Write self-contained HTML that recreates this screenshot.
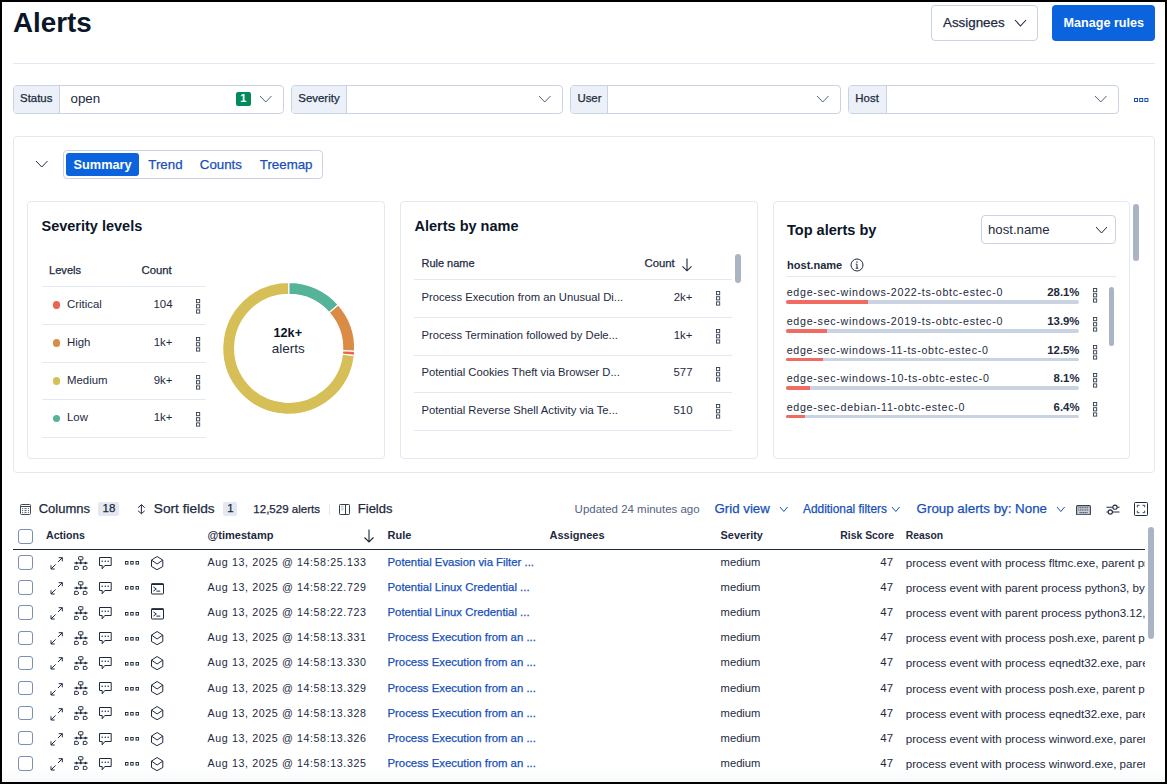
<!DOCTYPE html>
<html><head><meta charset="utf-8">
<style>
*{box-sizing:border-box;margin:0;padding:0}
html,body{width:1167px;height:784px;overflow:hidden;background:#fff}
body{font-family:"Liberation Sans",sans-serif;color:#1D2A3E;position:relative}
.a{position:absolute;white-space:nowrap}
.frame{position:absolute;left:0;top:0;width:1167px;height:784px;border:2px solid #000;z-index:50;pointer-events:none}
</style></head><body>
<div class="frame"></div>
<div class="a" style="left:13.00px;top:9px;font-size:27.8px;line-height:27.8px;color:#0B1628;font-weight:bold;">Alerts</div>
<div class="a" style="left:931px;top:5px;width:107px;height:36px;border:1px solid #CAD3E2;border-radius:4px"></div>
<div class="a" style="left:943.00px;top:16px;font-size:13.37px;line-height:13.37px;color:#1D2A3E;-webkit-text-stroke:0.25px currentColor;">Assignees</div>
<svg class="a" style="left:1014px;top:19.2px" width="13" height="8" viewBox="0 0 13 8"><path d="M1 1L6.50 7.00L12.00 1" fill="none" stroke="#1D2A3E" stroke-width="1.1"/></svg>
<div class="a" style="left:1052px;top:5px;width:103px;height:36px;background:#0B64DD;border-radius:4px"></div>
<div class="a" style="left:1063.50px;top:17px;font-size:12.6px;line-height:12.6px;color:#fff;font-weight:bold;">Manage rules</div>
<div class="a" style="left:13px;top:63px;width:1142px;height:1px;background:#E3E8F2"></div>
<div class="a" style="left:13px;top:85px;width:271px;height:29px;border:1px solid #CAD3E2;border-radius:4px;overflow:hidden"></div>
<div class="a" style="left:14px;top:86px;width:45.6px;height:27px;background:#ECF1F9;border-right:1px solid #CAD3E2;border-radius:3px 0 0 3px"></div>
<div class="a" style="left:20.00px;top:93px;font-size:11.45px;line-height:11.45px;color:#1D2A3E;-webkit-text-stroke:0.25px currentColor;">Status</div>
<svg class="a" style="left:259px;top:95px" width="13.5" height="8" viewBox="0 0 13.5 8"><path d="M1 1L6.75 7.00L12.50 1" fill="none" stroke="#516381" stroke-width="1"/></svg>
<div class="a" style="left:291.3px;top:85px;width:271.3px;height:29px;border:1px solid #CAD3E2;border-radius:4px;overflow:hidden"></div>
<div class="a" style="left:292.3px;top:86px;width:55.2px;height:27px;background:#ECF1F9;border-right:1px solid #CAD3E2;border-radius:3px 0 0 3px"></div>
<div class="a" style="left:298.30px;top:93px;font-size:11.45px;line-height:11.45px;color:#1D2A3E;-webkit-text-stroke:0.25px currentColor;">Severity</div>
<svg class="a" style="left:537.6px;top:95px" width="13.5" height="8" viewBox="0 0 13.5 8"><path d="M1 1L6.75 7.00L12.50 1" fill="none" stroke="#516381" stroke-width="1"/></svg>
<div class="a" style="left:570.4px;top:85px;width:270.2px;height:29px;border:1px solid #CAD3E2;border-radius:4px;overflow:hidden"></div>
<div class="a" style="left:571.4px;top:86px;width:37px;height:27px;background:#ECF1F9;border-right:1px solid #CAD3E2;border-radius:3px 0 0 3px"></div>
<div class="a" style="left:577.40px;top:93px;font-size:11.45px;line-height:11.45px;color:#1D2A3E;-webkit-text-stroke:0.25px currentColor;">User</div>
<svg class="a" style="left:815.5999999999999px;top:95px" width="13.5" height="8" viewBox="0 0 13.5 8"><path d="M1 1L6.75 7.00L12.50 1" fill="none" stroke="#516381" stroke-width="1"/></svg>
<div class="a" style="left:848.3px;top:85px;width:270.7px;height:29px;border:1px solid #CAD3E2;border-radius:4px;overflow:hidden"></div>
<div class="a" style="left:849.3px;top:86px;width:38px;height:27px;background:#ECF1F9;border-right:1px solid #CAD3E2;border-radius:3px 0 0 3px"></div>
<div class="a" style="left:855.30px;top:93px;font-size:11.45px;line-height:11.45px;color:#1D2A3E;-webkit-text-stroke:0.25px currentColor;">Host</div>
<svg class="a" style="left:1094.0px;top:95px" width="13.5" height="8" viewBox="0 0 13.5 8"><path d="M1 1L6.75 7.00L12.50 1" fill="none" stroke="#516381" stroke-width="1"/></svg>
<div class="a" style="left:70.50px;top:92px;font-size:13.35px;line-height:13.35px;color:#1D2A3E;">open</div>
<div class="a" style="left:236px;top:92px;width:15px;height:14px;background:#008A5E;border-radius:2px"></div>
<div class="a" style="left:240.30px;top:93px;font-size:11.0px;line-height:11.0px;color:#fff;font-weight:bold;">1</div>
<svg class="a" style="left:1133.5px;top:98px" width="15" height="5" viewBox="0 0 15 5"><g fill="none" stroke="#1750BA" stroke-width="1"><rect x="0.5" y="0.5" width="3" height="3"/><rect x="5.7" y="0.5" width="3" height="3"/><rect x="10.9" y="0.5" width="3" height="3"/></g></svg>
<div class="a" style="left:13px;top:136px;width:1142px;height:337px;border:1px solid #E3E8F2;border-radius:4px"></div>
<svg class="a" style="left:34.5px;top:160px" width="13.5" height="8" viewBox="0 0 13.5 8"><path d="M1 1L6.75 7.00L12.50 1" fill="none" stroke="#1D2A3E" stroke-width="1"/></svg>
<div class="a" style="left:63px;top:150px;width:260px;height:29px;border:1px solid #CAD3E2;border-radius:4px"></div>
<div class="a" style="left:66px;top:153px;width:73px;height:23px;background:#0B64DD;border-radius:3px"></div>
<div class="a" style="left:73.50px;top:159px;font-size:12.75px;line-height:12.75px;color:#fff;font-weight:bold;">Summary</div>
<div class="a" style="left:148.30px;top:158px;font-size:13.3px;line-height:13.3px;color:#1750BA;-webkit-text-stroke:0.25px currentColor;">Trend</div>
<div class="a" style="left:199.80px;top:158px;font-size:13.3px;line-height:13.3px;color:#1750BA;-webkit-text-stroke:0.25px currentColor;">Counts</div>
<div class="a" style="left:259.80px;top:158px;font-size:13.3px;line-height:13.3px;color:#1750BA;-webkit-text-stroke:0.25px currentColor;">Treemap</div>
<div class="a" style="left:27px;top:201px;width:358px;height:258px;border:1px solid #E3E8F2;border-radius:4px"></div>
<div class="a" style="left:400px;top:201px;width:358px;height:258px;border:1px solid #E3E8F2;border-radius:4px"></div>
<div class="a" style="left:772.5px;top:201px;width:357.5px;height:258px;border:1px solid #E3E8F2;border-radius:4px"></div>
<div class="a" style="left:41.50px;top:219px;font-size:14.5px;line-height:14.5px;color:#0B1628;font-weight:bold;">Severity levels</div>
<div class="a" style="left:49.00px;top:265px;font-size:11.1px;line-height:11.1px;color:#1D2A3E;-webkit-text-stroke:0.25px currentColor;">Levels</div>
<div class="a" style="left:141.50px;top:265px;font-size:11.35px;line-height:11.35px;color:#1D2A3E;-webkit-text-stroke:0.25px currentColor;">Count</div>
<div class="a" style="left:42px;top:286px;width:164px;height:1px;background:#E3E8F2"></div>
<div class="a" style="left:42px;top:324px;width:164px;height:1px;background:#E3E8F2"></div>
<div class="a" style="left:42px;top:361.7px;width:164px;height:1px;background:#E3E8F2"></div>
<div class="a" style="left:42px;top:399.3px;width:164px;height:1px;background:#E3E8F2"></div>
<div class="a" style="left:42px;top:437px;width:164px;height:1px;background:#E3E8F2"></div>
<div class="a" style="left:52.5px;top:301.2px;width:7.8px;height:7.8px;background:#E7664C;border-radius:50%"></div>
<div class="a" style="left:67.00px;top:299px;font-size:11.42px;line-height:11.42px;color:#1D2A3E;">Critical</div>
<div class="a" style="left:-127.50px;width:300px;text-align:right;top:299px;font-size:11.42px;line-height:11.42px;color:#1D2A3E;">104</div>
<svg class="a" style="left:195.5px;top:299px" width="5" height="15" viewBox="0 0 5 15"><g fill="none" stroke="#1D2A3E" stroke-width=".9" opacity=".9"><rect x="0.5" y="0.5" width="3.2" height="3.2"/><rect x="0.5" y="5.7" width="3.2" height="3.2"/><rect x="0.5" y="10.9" width="3.2" height="3.2"/></g></svg>
<div class="a" style="left:52.5px;top:339.2px;width:7.8px;height:7.8px;background:#DA8B45;border-radius:50%"></div>
<div class="a" style="left:67.00px;top:337px;font-size:11.42px;line-height:11.42px;color:#1D2A3E;">High</div>
<div class="a" style="left:-127.50px;width:300px;text-align:right;top:337px;font-size:11.42px;line-height:11.42px;color:#1D2A3E;">1k+</div>
<svg class="a" style="left:195.5px;top:337px" width="5" height="15" viewBox="0 0 5 15"><g fill="none" stroke="#1D2A3E" stroke-width=".9" opacity=".9"><rect x="0.5" y="0.5" width="3.2" height="3.2"/><rect x="0.5" y="5.7" width="3.2" height="3.2"/><rect x="0.5" y="10.9" width="3.2" height="3.2"/></g></svg>
<div class="a" style="left:52.5px;top:376.9px;width:7.8px;height:7.8px;background:#D6BF57;border-radius:50%"></div>
<div class="a" style="left:67.00px;top:375px;font-size:11.42px;line-height:11.42px;color:#1D2A3E;">Medium</div>
<div class="a" style="left:-127.50px;width:300px;text-align:right;top:375px;font-size:11.42px;line-height:11.42px;color:#1D2A3E;">9k+</div>
<svg class="a" style="left:195.5px;top:374.7px" width="5" height="15" viewBox="0 0 5 15"><g fill="none" stroke="#1D2A3E" stroke-width=".9" opacity=".9"><rect x="0.5" y="0.5" width="3.2" height="3.2"/><rect x="0.5" y="5.7" width="3.2" height="3.2"/><rect x="0.5" y="10.9" width="3.2" height="3.2"/></g></svg>
<div class="a" style="left:52.5px;top:414.5px;width:7.8px;height:7.8px;background:#54B399;border-radius:50%"></div>
<div class="a" style="left:67.00px;top:412px;font-size:11.42px;line-height:11.42px;color:#1D2A3E;">Low</div>
<div class="a" style="left:-127.50px;width:300px;text-align:right;top:412px;font-size:11.42px;line-height:11.42px;color:#1D2A3E;">1k+</div>
<svg class="a" style="left:195.5px;top:412.3px" width="5" height="15" viewBox="0 0 5 15"><g fill="none" stroke="#1D2A3E" stroke-width=".9" opacity=".9"><rect x="0.5" y="0.5" width="3.2" height="3.2"/><rect x="0.5" y="5.7" width="3.2" height="3.2"/><rect x="0.5" y="10.9" width="3.2" height="3.2"/></g></svg>
<svg class="a" style="left:0;top:0" width="1167" height="784"><g stroke="#fff" stroke-width="1.2"><path d="M288.70 282.30A66 66 0 0 1 338.28 304.74L329.27 312.66A54 54 0 0 0 288.70 294.30Z" fill="#54B399"/><path d="M338.28 304.74A66 66 0 0 1 354.63 351.29L342.64 350.75A54 54 0 0 0 329.27 312.66Z" fill="#DA8B45"/><path d="M354.63 351.29A66 66 0 0 1 354.30 355.54L342.37 354.23A54 54 0 0 0 342.64 350.75Z" fill="#E7664C"/><path d="M354.30 355.54A66 66 0 1 1 288.70 282.30L288.70 294.30A54 54 0 1 0 342.37 354.23Z" fill="#D6BF57"/></g></svg>
<div class="a" style="left:273.50px;top:327px;font-size:12.7px;line-height:12.7px;color:#0B1628;font-weight:bold;">12k+</div>
<div class="a" style="left:271.80px;top:342px;font-size:13.5px;line-height:13.5px;color:#1D2A3E;">alerts</div>
<div class="a" style="left:414.50px;top:219px;font-size:14.5px;line-height:14.5px;color:#0B1628;font-weight:bold;">Alerts by name</div>
<div class="a" style="left:421.50px;top:258px;font-size:10.98px;line-height:10.98px;color:#1D2A3E;-webkit-text-stroke:0.25px currentColor;">Rule name</div>
<div class="a" style="left:644.50px;top:258px;font-size:11.35px;line-height:11.35px;color:#1D2A3E;-webkit-text-stroke:0.25px currentColor;">Count</div>
<svg class="a" style="left:680.5px;top:257.5px" width="12" height="14" viewBox="0 0 12 14"><path d="M6 0.5v12.5M1.5 8.3L6 12.8l4.5-4.5" fill="none" stroke="#1D2A3E" stroke-width="1.1"/></svg>
<div class="a" style="left:735px;top:253.5px;width:6px;height:29px;background:#A9B4C5;border-radius:3px"></div>
<div class="a" style="left:414px;top:279.3px;width:318px;height:1px;background:#E3E8F2"></div>
<div class="a" style="left:414px;top:317.4px;width:318px;height:1px;background:#E3E8F2"></div>
<div class="a" style="left:414px;top:354.8px;width:318px;height:1px;background:#E3E8F2"></div>
<div class="a" style="left:414px;top:392.3px;width:318px;height:1px;background:#E3E8F2"></div>
<div class="a" style="left:414px;top:430px;width:318px;height:1px;background:#E3E8F2"></div>
<div class="a" style="left:421.50px;top:292px;font-size:11.24px;line-height:11.24px;color:#1D2A3E;">Process Execution from an Unusual Di...</div>
<div class="a" style="left:392.50px;width:300px;text-align:right;top:292px;font-size:11.42px;line-height:11.42px;color:#1D2A3E;">2k+</div>
<svg class="a" style="left:715.5px;top:291.1px" width="5" height="15" viewBox="0 0 5 15"><g fill="none" stroke="#1D2A3E" stroke-width=".9" opacity=".9"><rect x="0.5" y="0.5" width="3.2" height="3.2"/><rect x="0.5" y="5.7" width="3.2" height="3.2"/><rect x="0.5" y="10.9" width="3.2" height="3.2"/></g></svg>
<div class="a" style="left:421.50px;top:330px;font-size:11.24px;line-height:11.24px;color:#1D2A3E;">Process Termination followed by Dele...</div>
<div class="a" style="left:392.50px;width:300px;text-align:right;top:330px;font-size:11.42px;line-height:11.42px;color:#1D2A3E;">1k+</div>
<svg class="a" style="left:715.5px;top:329.2px" width="5" height="15" viewBox="0 0 5 15"><g fill="none" stroke="#1D2A3E" stroke-width=".9" opacity=".9"><rect x="0.5" y="0.5" width="3.2" height="3.2"/><rect x="0.5" y="5.7" width="3.2" height="3.2"/><rect x="0.5" y="10.9" width="3.2" height="3.2"/></g></svg>
<div class="a" style="left:421.50px;top:367px;font-size:11.24px;line-height:11.24px;color:#1D2A3E;">Potential Cookies Theft via Browser D...</div>
<div class="a" style="left:392.50px;width:300px;text-align:right;top:367px;font-size:11.42px;line-height:11.42px;color:#1D2A3E;">577</div>
<svg class="a" style="left:715.5px;top:366.6px" width="5" height="15" viewBox="0 0 5 15"><g fill="none" stroke="#1D2A3E" stroke-width=".9" opacity=".9"><rect x="0.5" y="0.5" width="3.2" height="3.2"/><rect x="0.5" y="5.7" width="3.2" height="3.2"/><rect x="0.5" y="10.9" width="3.2" height="3.2"/></g></svg>
<div class="a" style="left:421.50px;top:405px;font-size:11.24px;line-height:11.24px;color:#1D2A3E;">Potential Reverse Shell Activity via Te...</div>
<div class="a" style="left:392.50px;width:300px;text-align:right;top:405px;font-size:11.42px;line-height:11.42px;color:#1D2A3E;">510</div>
<svg class="a" style="left:715.5px;top:404.1px" width="5" height="15" viewBox="0 0 5 15"><g fill="none" stroke="#1D2A3E" stroke-width=".9" opacity=".9"><rect x="0.5" y="0.5" width="3.2" height="3.2"/><rect x="0.5" y="5.7" width="3.2" height="3.2"/><rect x="0.5" y="10.9" width="3.2" height="3.2"/></g></svg>
<div class="a" style="left:787.00px;top:223px;font-size:14.55px;line-height:14.55px;color:#0B1628;font-weight:bold;">Top alerts by</div>
<div class="a" style="left:981px;top:215px;width:135px;height:29px;border:1px solid #CAD3E2;border-radius:4px"></div>
<div class="a" style="left:988.00px;top:223px;font-size:13.19px;line-height:13.19px;color:#1D2A3E;">host.name</div>
<svg class="a" style="left:1095px;top:225.5px" width="13" height="8" viewBox="0 0 13 8"><path d="M1 1L6.50 7.00L12.00 1" fill="none" stroke="#1D2A3E" stroke-width="1"/></svg>
<div class="a" style="left:787.00px;top:260px;font-size:11.06px;line-height:11.06px;color:#1D2A3E;font-weight:bold;">host.name</div>
<svg class="a" style="left:850px;top:257.8px" width="14" height="14" viewBox="0 0 14 14"><circle cx="7" cy="7" r="6" fill="none" stroke="#1D2A3E" stroke-width="1"/><path d="M7 6.2v4M5.7 10.2h2.6M5.8 6.2h1.2" fill="none" stroke="#1D2A3E" stroke-width="1"/><circle cx="7" cy="4.1" r=".75" fill="#1D2A3E"/></svg>
<div class="a" style="left:786px;top:276px;width:330px;height:1px;background:#E3E8F2"></div>
<div class="a" style="left:786.70px;top:287px;font-size:10.68px;line-height:10.68px;color:#1D2A3E;letter-spacing:0.718px;">edge-sec-windows-2022-ts-obtc-estec-0</div>
<div class="a" style="left:779.50px;width:300px;text-align:right;top:287px;font-size:11.39px;line-height:11.39px;color:#1D2A3E;font-weight:bold;">28.1%</div>
<div class="a" style="left:786px;top:300.3px;width:293px;height:3.6px;background:#CAD3E2;border-radius:2px;overflow:hidden"></div>
<div class="a" style="left:786px;top:300.3px;width:82.3px;height:3.6px;background:#F06C62;border-radius:2px 0 0 2px"></div>
<svg class="a" style="left:1092.5px;top:287.7px" width="5" height="15" viewBox="0 0 5 15"><g fill="none" stroke="#1D2A3E" stroke-width=".9" opacity=".9"><rect x="0.5" y="0.5" width="3.2" height="3.2"/><rect x="0.5" y="5.7" width="3.2" height="3.2"/><rect x="0.5" y="10.9" width="3.2" height="3.2"/></g></svg>
<div class="a" style="left:786.70px;top:316px;font-size:10.68px;line-height:10.68px;color:#1D2A3E;letter-spacing:0.718px;">edge-sec-windows-2019-ts-obtc-estec-0</div>
<div class="a" style="left:779.50px;width:300px;text-align:right;top:316px;font-size:11.39px;line-height:11.39px;color:#1D2A3E;font-weight:bold;">13.9%</div>
<div class="a" style="left:786px;top:329.3px;width:293px;height:3.6px;background:#CAD3E2;border-radius:2px;overflow:hidden"></div>
<div class="a" style="left:786px;top:329.3px;width:40.7px;height:3.6px;background:#F06C62;border-radius:2px 0 0 2px"></div>
<svg class="a" style="left:1092.5px;top:316.7px" width="5" height="15" viewBox="0 0 5 15"><g fill="none" stroke="#1D2A3E" stroke-width=".9" opacity=".9"><rect x="0.5" y="0.5" width="3.2" height="3.2"/><rect x="0.5" y="5.7" width="3.2" height="3.2"/><rect x="0.5" y="10.9" width="3.2" height="3.2"/></g></svg>
<div class="a" style="left:786.70px;top:345px;font-size:10.68px;line-height:10.68px;color:#1D2A3E;letter-spacing:0.709px;">edge-sec-windows-11-ts-obtc-estec-0</div>
<div class="a" style="left:779.50px;width:300px;text-align:right;top:345px;font-size:11.39px;line-height:11.39px;color:#1D2A3E;font-weight:bold;">12.5%</div>
<div class="a" style="left:786px;top:357.8px;width:293px;height:3.6px;background:#CAD3E2;border-radius:2px;overflow:hidden"></div>
<div class="a" style="left:786px;top:357.8px;width:36.6px;height:3.6px;background:#F06C62;border-radius:2px 0 0 2px"></div>
<svg class="a" style="left:1092.5px;top:345.2px" width="5" height="15" viewBox="0 0 5 15"><g fill="none" stroke="#1D2A3E" stroke-width=".9" opacity=".9"><rect x="0.5" y="0.5" width="3.2" height="3.2"/><rect x="0.5" y="5.7" width="3.2" height="3.2"/><rect x="0.5" y="10.9" width="3.2" height="3.2"/></g></svg>
<div class="a" style="left:786.70px;top:373px;font-size:10.68px;line-height:10.68px;color:#1D2A3E;letter-spacing:0.713px;">edge-sec-windows-10-ts-obtc-estec-0</div>
<div class="a" style="left:779.50px;width:300px;text-align:right;top:373px;font-size:11.39px;line-height:11.39px;color:#1D2A3E;font-weight:bold;">8.1%</div>
<div class="a" style="left:786px;top:386.0px;width:293px;height:3.6px;background:#CAD3E2;border-radius:2px;overflow:hidden"></div>
<div class="a" style="left:786px;top:386.0px;width:23.7px;height:3.6px;background:#F06C62;border-radius:2px 0 0 2px"></div>
<svg class="a" style="left:1092.5px;top:373.4px" width="5" height="15" viewBox="0 0 5 15"><g fill="none" stroke="#1D2A3E" stroke-width=".9" opacity=".9"><rect x="0.5" y="0.5" width="3.2" height="3.2"/><rect x="0.5" y="5.7" width="3.2" height="3.2"/><rect x="0.5" y="10.9" width="3.2" height="3.2"/></g></svg>
<div class="a" style="left:786.70px;top:402px;font-size:10.68px;line-height:10.68px;color:#1D2A3E;letter-spacing:0.710px;">edge-sec-debian-11-obtc-estec-0</div>
<div class="a" style="left:779.50px;width:300px;text-align:right;top:402px;font-size:11.39px;line-height:11.39px;color:#1D2A3E;font-weight:bold;">6.4%</div>
<div class="a" style="left:786px;top:414.9px;width:293px;height:3.6px;background:#CAD3E2;border-radius:2px;overflow:hidden"></div>
<div class="a" style="left:786px;top:414.9px;width:18.8px;height:3.6px;background:#F06C62;border-radius:2px 0 0 2px"></div>
<svg class="a" style="left:1092.5px;top:402.3px" width="5" height="15" viewBox="0 0 5 15"><g fill="none" stroke="#1D2A3E" stroke-width=".9" opacity=".9"><rect x="0.5" y="0.5" width="3.2" height="3.2"/><rect x="0.5" y="5.7" width="3.2" height="3.2"/><rect x="0.5" y="10.9" width="3.2" height="3.2"/></g></svg>
<div class="a" style="left:1109px;top:286.7px;width:5px;height:59px;background:#A9B4C5;border-radius:3px"></div>
<div class="a" style="left:1133px;top:204px;width:6px;height:57px;background:#A9B4C5;border-radius:3px"></div>
<svg class="a" style="left:20px;top:504px" width="11" height="11" viewBox="0 0 11 11"><g fill="none" stroke="#1D2A3E" stroke-width="1" opacity=".85"><rect x="0.5" y="0.5" width="10" height="10" rx="1"/><path d="M0.5 2.5h10"/></g><g fill="#1D2A3E" opacity=".8"><circle cx="2.6" cy="4.6" r=".6"/><circle cx="2.6" cy="6.6" r=".6"/><circle cx="2.6" cy="8.6" r=".6"/><rect x="4.5" y="4.1" width="2" height="1"/><rect x="4.5" y="6.1" width="2" height="1"/><rect x="4.5" y="8.1" width="2" height="1"/><circle cx="8.4" cy="4.6" r=".6"/><circle cx="8.4" cy="6.6" r=".6"/><circle cx="8.4" cy="8.6" r=".6"/></g></svg>
<div class="a" style="left:38.70px;top:502px;font-size:13.03px;line-height:13.03px;color:#1D2A3E;-webkit-text-stroke:0.25px currentColor;">Columns</div>
<div class="a" style="left:98px;top:502px;width:21px;height:13.5px;background:#E3E8F2;border-radius:2px"></div>
<div class="a" style="left:102.50px;top:503px;font-size:11.5px;line-height:11.5px;color:#1D2A3E;-webkit-text-stroke:0.25px currentColor;">18</div>
<svg class="a" style="left:136px;top:503px" width="11" height="12" viewBox="0 0 11 12"><path d="M5.4 1.8V10.5M2.1 4.7L5.4 1.7 8.7 4.7M2.1 7.8L5.4 10.7 8.7 7.8" fill="none" stroke="#1D2A3E" stroke-width="1"/></svg>
<div class="a" style="left:153.80px;top:502px;font-size:13.7px;line-height:13.7px;color:#1D2A3E;-webkit-text-stroke:0.25px currentColor;">Sort fields</div>
<div class="a" style="left:223px;top:502px;width:14px;height:13.5px;background:#E3E8F2;border-radius:2px"></div>
<div class="a" style="left:227.30px;top:503px;font-size:11.5px;line-height:11.5px;color:#1D2A3E;-webkit-text-stroke:0.25px currentColor;">1</div>
<div class="a" style="left:253.30px;top:504px;font-size:11.55px;line-height:11.55px;color:#1D2A3E;-webkit-text-stroke:0.25px currentColor;">12,529 alerts</div>
<div class="a" style="left:329px;top:504px;width:1px;height:11px;background:#E3E8F2"></div>
<svg class="a" style="left:339px;top:504px" width="11" height="11" viewBox="0 0 11 11"><g fill="none" stroke="#1D2A3E" stroke-width="1" opacity=".9"><rect x="0.5" y="0.5" width="10" height="10" rx=".8"/><path d="M6.5 0.5v10"/></g><g stroke="#1D2A3E" stroke-width=".9" opacity=".35"><path d="M2.2 2.2h2.4M2.2 4h2.4M2.2 5.8h2.4"/></g></svg>
<div class="a" style="left:357.80px;top:502px;font-size:13.01px;line-height:13.01px;color:#1D2A3E;-webkit-text-stroke:0.25px currentColor;">Fields</div>
<div class="a" style="left:574.60px;top:504px;font-size:11.47px;line-height:11.47px;color:#516381;">Updated 24 minutes ago</div>
<div class="a" style="left:714.50px;top:502px;font-size:13.27px;line-height:13.27px;color:#1750BA;-webkit-text-stroke:0.25px currentColor;">Grid view</div>
<svg class="a" style="left:778.7px;top:506px" width="9.6" height="6.5" viewBox="0 0 9.6 6.5"><path d="M1 1L4.80 5.50L8.60 1" fill="none" stroke="#1750BA" stroke-width="1"/></svg>
<div class="a" style="left:803.00px;top:504px;font-size:11.9px;line-height:11.9px;color:#1750BA;-webkit-text-stroke:0.25px currentColor;">Additional filters</div>
<svg class="a" style="left:891.3px;top:506px" width="9.6" height="6.5" viewBox="0 0 9.6 6.5"><path d="M1 1L4.80 5.50L8.60 1" fill="none" stroke="#1750BA" stroke-width="1"/></svg>
<div class="a" style="left:916.60px;top:502px;font-size:13.33px;line-height:13.33px;color:#1750BA;-webkit-text-stroke:0.25px currentColor;">Group alerts by: None</div>
<svg class="a" style="left:1055.5px;top:506px" width="9.6" height="6.5" viewBox="0 0 9.6 6.5"><path d="M1 1L4.80 5.50L8.60 1" fill="none" stroke="#1750BA" stroke-width="1"/></svg>
<svg class="a" style="left:1076px;top:504.5px" width="15" height="10.5" viewBox="0 0 15 10.5"><rect x="0.6" y="0.6" width="13.8" height="9.3" rx="1" fill="#C9CED6" stroke="#343F52" stroke-width="1.1"/><path d="M2.3 2.8h10.4M2.3 5h10.4M3.5 7.6h8" stroke="#4A5567" stroke-width="1.1" stroke-dasharray="1.2 .5"/></svg>
<svg class="a" style="left:1105.5px;top:503.5px" width="14" height="11" viewBox="0 0 14 11"><g fill="none" stroke="#1D2A3E" stroke-width="1.1"><path d="M0.5 3.2h13M0.5 8h13"/><circle cx="9" cy="3.2" r="2.1" fill="#fff"/><circle cx="4.3" cy="8" r="2.1" fill="#fff"/></g></svg>
<svg class="a" style="left:1134px;top:502px" width="14" height="14" viewBox="0 0 14 14"><rect x="0.5" y="0.5" width="13" height="13" rx=".8" fill="none" stroke="#1D2A3E" stroke-width="1"/><path d="M3.3 5.3V3.3h2.2M8.5 3.3h2.2v2M10.7 8.7v2H8.5M5.5 10.7H3.3V8.7" fill="none" stroke="#1D2A3E" stroke-width="1" opacity=".85"/></svg>
<div class="a" style="left:18px;top:529px;width:14.5px;height:14.5px;border:1px solid #7A8FB5;border-radius:3px;background:#fff"></div>
<div class="a" style="left:46.00px;top:530px;font-size:10.64px;line-height:10.64px;color:#1D2A3E;font-weight:bold;">Actions</div>
<div class="a" style="left:207.50px;top:530px;font-size:11.04px;line-height:11.04px;color:#1D2A3E;font-weight:bold;">@timestamp</div>
<div class="a" style="left:387.50px;top:530px;font-size:11.0px;line-height:11.0px;color:#1D2A3E;font-weight:bold;">Rule</div>
<div class="a" style="left:549.50px;top:530px;font-size:11.0px;line-height:11.0px;color:#1D2A3E;font-weight:bold;">Assignees</div>
<div class="a" style="left:720.60px;top:530px;font-size:10.89px;line-height:10.89px;color:#1D2A3E;font-weight:bold;">Severity</div>
<div class="a" style="left:594.00px;width:300px;text-align:right;top:531px;font-size:10.39px;line-height:10.39px;color:#1D2A3E;font-weight:bold;">Risk Score</div>
<div class="a" style="left:905.70px;top:531px;font-size:10.33px;line-height:10.33px;color:#1D2A3E;font-weight:bold;">Reason</div>
<svg class="a" style="left:363px;top:529px" width="12" height="14" viewBox="0 0 12 14"><path d="M6 0.5v12.5M1.5 8.5L6 13l4.5-4.5" fill="none" stroke="#1D2A3E" stroke-width="1.1"/></svg>
<div class="a" style="left:13px;top:548.5px;width:1132px;height:1.5px;background:#1D2A3E"></div>
<div class="a" style="left:1148px;top:527px;width:6px;height:111.5px;background:#A9B4C5;border-radius:3px"></div>
<div class="a" style="left:2px;top:768px;width:1163px;height:14px;background:linear-gradient(rgba(255,255,255,0),rgba(230,234,240,.3))"></div>
<div class="a" style="left:18px;top:555.2px;width:14.5px;height:14.5px;border:1px solid #7A8FB5;border-radius:3px;background:#fff"></div>
<svg class="a" style="left:49.5px;top:557.0px" width="13" height="13" viewBox="0 0 13 13"><g fill="none" stroke="#1D2A3E" stroke-width="1"><path d="M1 12L5.6 7.4M8 5L12.3 0.7M1 8.3V12h3.7M8.7 0.7h3.6v3.6"/></g></svg>
<svg class="a" style="left:73.7px;top:555.5px" width="14" height="14" viewBox="0 0 14 14"><g fill="none" stroke="#1D2A3E" stroke-width="1"><rect x="4.6" y="0.7" width="4.3" height="3.2" rx=".6"/><path d="M6.75 3.9V7M0.3 7h13.4"/><path d="M0.7 10.3h2.8l1.2 1.7-1.2 1.7H0.7z"/><path d="M9.3 10.3h2.8l1.2 1.7-1.2 1.7H9.3z"/></g><g fill="#1D2A3E"><path d="M1.2 7L2.6 5.6 4 7 2.6 8.4z"/><path d="M5.4 7L6.8 5.6 8.2 7 6.8 8.4z"/><path d="M10 7L11.4 5.6 12.8 7 11.4 8.4z"/></g></svg>
<svg class="a" style="left:99px;top:556.8px" width="13" height="13" viewBox="0 0 13 13"><g fill="none" stroke="#1D2A3E" stroke-width="1"><path d="M0.5 0.5h11.7v8H5.8L3.2 11.8V8.5H0.5z"/></g><g fill="#1D2A3E"><circle cx="3.2" cy="4.3" r=".75"/><circle cx="6.3" cy="4.3" r=".75"/><circle cx="9.2" cy="4.3" r=".75"/></g></svg>
<svg class="a" style="left:124.7px;top:561.3px" width="15" height="4" viewBox="0 0 15 4"><g fill="none" stroke="#1D2A3E" stroke-width=".95"><rect x="0.5" y="0.5" width="2.5" height="2.6"/><rect x="5.7" y="0.5" width="2.5" height="2.6"/><rect x="11" y="0.5" width="2.5" height="2.6"/></g></svg>
<svg class="a" style="left:151px;top:555.8px" width="13" height="14" viewBox="0 0 13 14"><path d="M6.1 0.5L11.8 4.1v6.4L6.1 13.7 0.5 10.5V4.1zM0.5 4.1L6.1 8l5.7-3.9" fill="none" stroke="#1D2A3E" stroke-width="1" stroke-linejoin="round"/></svg>
<div class="a" style="left:207.50px;top:557px;font-size:10.68px;line-height:10.68px;color:#1D2A3E;letter-spacing:0.610px;">Aug 13, 2025 @ 14:58:25.133</div>
<div class="a" style="left:387.50px;top:557px;font-size:11.36px;line-height:11.36px;color:#1750BA;-webkit-text-stroke:0.25px currentColor;">Potential Evasion via Filter ...</div>
<div class="a" style="left:720.60px;top:557px;font-size:11.19px;line-height:11.19px;color:#1D2A3E;">medium</div>
<div class="a" style="left:593.00px;width:300px;text-align:right;top:557px;font-size:11.4px;line-height:11.4px;color:#1D2A3E;">47</div>
<div class="a" style="left:905.70px;top:557px;font-size:11.6px;line-height:11.6px;color:#1D2A3E;width:239.3px;overflow:hidden;">process event with process fltmc.exe, parent pr</div>
<div class="a" style="left:18px;top:580.3px;width:14.5px;height:14.5px;border:1px solid #7A8FB5;border-radius:3px;background:#fff"></div>
<svg class="a" style="left:49.5px;top:582.1px" width="13" height="13" viewBox="0 0 13 13"><g fill="none" stroke="#1D2A3E" stroke-width="1"><path d="M1 12L5.6 7.4M8 5L12.3 0.7M1 8.3V12h3.7M8.7 0.7h3.6v3.6"/></g></svg>
<svg class="a" style="left:73.7px;top:580.6px" width="14" height="14" viewBox="0 0 14 14"><g fill="none" stroke="#1D2A3E" stroke-width="1"><rect x="4.6" y="0.7" width="4.3" height="3.2" rx=".6"/><path d="M6.75 3.9V7M0.3 7h13.4"/><path d="M0.7 10.3h2.8l1.2 1.7-1.2 1.7H0.7z"/><path d="M9.3 10.3h2.8l1.2 1.7-1.2 1.7H9.3z"/></g><g fill="#1D2A3E"><path d="M1.2 7L2.6 5.6 4 7 2.6 8.4z"/><path d="M5.4 7L6.8 5.6 8.2 7 6.8 8.4z"/><path d="M10 7L11.4 5.6 12.8 7 11.4 8.4z"/></g></svg>
<svg class="a" style="left:99px;top:581.9px" width="13" height="13" viewBox="0 0 13 13"><g fill="none" stroke="#1D2A3E" stroke-width="1"><path d="M0.5 0.5h11.7v8H5.8L3.2 11.8V8.5H0.5z"/></g><g fill="#1D2A3E"><circle cx="3.2" cy="4.3" r=".75"/><circle cx="6.3" cy="4.3" r=".75"/><circle cx="9.2" cy="4.3" r=".75"/></g></svg>
<svg class="a" style="left:124.7px;top:586.4px" width="15" height="4" viewBox="0 0 15 4"><g fill="none" stroke="#1D2A3E" stroke-width=".95"><rect x="0.5" y="0.5" width="2.5" height="2.6"/><rect x="5.7" y="0.5" width="2.5" height="2.6"/><rect x="11" y="0.5" width="2.5" height="2.6"/></g></svg>
<svg class="a" style="left:151px;top:582.6px" width="13" height="12" viewBox="0 0 13 12"><g fill="none" stroke="#1D2A3E" stroke-width="1"><rect x="0.5" y="0.7" width="12" height="10.3" rx=".6"/><path d="M0.5 1.3h12" stroke-width="1.4"/><path d="M2.4 3.9L5.3 6 2.4 8.1M5.4 8.1h3.8"/></g></svg>
<div class="a" style="left:207.50px;top:582px;font-size:10.68px;line-height:10.68px;color:#1D2A3E;letter-spacing:0.610px;">Aug 13, 2025 @ 14:58:22.729</div>
<div class="a" style="left:387.50px;top:582px;font-size:11.36px;line-height:11.36px;color:#1750BA;-webkit-text-stroke:0.25px currentColor;">Potential Linux Credential ...</div>
<div class="a" style="left:720.60px;top:582px;font-size:11.19px;line-height:11.19px;color:#1D2A3E;">medium</div>
<div class="a" style="left:593.00px;width:300px;text-align:right;top:582px;font-size:11.4px;line-height:11.4px;color:#1D2A3E;">47</div>
<div class="a" style="left:905.70px;top:582px;font-size:11.6px;line-height:11.6px;color:#1D2A3E;width:239.3px;overflow:hidden;">process event with parent process python3, by</div>
<div class="a" style="left:18px;top:605.4px;width:14.5px;height:14.5px;border:1px solid #7A8FB5;border-radius:3px;background:#fff"></div>
<svg class="a" style="left:49.5px;top:607.2px" width="13" height="13" viewBox="0 0 13 13"><g fill="none" stroke="#1D2A3E" stroke-width="1"><path d="M1 12L5.6 7.4M8 5L12.3 0.7M1 8.3V12h3.7M8.7 0.7h3.6v3.6"/></g></svg>
<svg class="a" style="left:73.7px;top:605.7px" width="14" height="14" viewBox="0 0 14 14"><g fill="none" stroke="#1D2A3E" stroke-width="1"><rect x="4.6" y="0.7" width="4.3" height="3.2" rx=".6"/><path d="M6.75 3.9V7M0.3 7h13.4"/><path d="M0.7 10.3h2.8l1.2 1.7-1.2 1.7H0.7z"/><path d="M9.3 10.3h2.8l1.2 1.7-1.2 1.7H9.3z"/></g><g fill="#1D2A3E"><path d="M1.2 7L2.6 5.6 4 7 2.6 8.4z"/><path d="M5.4 7L6.8 5.6 8.2 7 6.8 8.4z"/><path d="M10 7L11.4 5.6 12.8 7 11.4 8.4z"/></g></svg>
<svg class="a" style="left:99px;top:607.0px" width="13" height="13" viewBox="0 0 13 13"><g fill="none" stroke="#1D2A3E" stroke-width="1"><path d="M0.5 0.5h11.7v8H5.8L3.2 11.8V8.5H0.5z"/></g><g fill="#1D2A3E"><circle cx="3.2" cy="4.3" r=".75"/><circle cx="6.3" cy="4.3" r=".75"/><circle cx="9.2" cy="4.3" r=".75"/></g></svg>
<svg class="a" style="left:124.7px;top:611.5px" width="15" height="4" viewBox="0 0 15 4"><g fill="none" stroke="#1D2A3E" stroke-width=".95"><rect x="0.5" y="0.5" width="2.5" height="2.6"/><rect x="5.7" y="0.5" width="2.5" height="2.6"/><rect x="11" y="0.5" width="2.5" height="2.6"/></g></svg>
<svg class="a" style="left:151px;top:607.7px" width="13" height="12" viewBox="0 0 13 12"><g fill="none" stroke="#1D2A3E" stroke-width="1"><rect x="0.5" y="0.7" width="12" height="10.3" rx=".6"/><path d="M0.5 1.3h12" stroke-width="1.4"/><path d="M2.4 3.9L5.3 6 2.4 8.1M5.4 8.1h3.8"/></g></svg>
<div class="a" style="left:207.50px;top:607px;font-size:10.68px;line-height:10.68px;color:#1D2A3E;letter-spacing:0.610px;">Aug 13, 2025 @ 14:58:22.723</div>
<div class="a" style="left:387.50px;top:607px;font-size:11.36px;line-height:11.36px;color:#1750BA;-webkit-text-stroke:0.25px currentColor;">Potential Linux Credential ...</div>
<div class="a" style="left:720.60px;top:607px;font-size:11.19px;line-height:11.19px;color:#1D2A3E;">medium</div>
<div class="a" style="left:593.00px;width:300px;text-align:right;top:607px;font-size:11.4px;line-height:11.4px;color:#1D2A3E;">47</div>
<div class="a" style="left:905.70px;top:607px;font-size:11.6px;line-height:11.6px;color:#1D2A3E;width:239.3px;overflow:hidden;">process event with parent process python3.12,</div>
<div class="a" style="left:18px;top:630.5px;width:14.5px;height:14.5px;border:1px solid #7A8FB5;border-radius:3px;background:#fff"></div>
<svg class="a" style="left:49.5px;top:632.3px" width="13" height="13" viewBox="0 0 13 13"><g fill="none" stroke="#1D2A3E" stroke-width="1"><path d="M1 12L5.6 7.4M8 5L12.3 0.7M1 8.3V12h3.7M8.7 0.7h3.6v3.6"/></g></svg>
<svg class="a" style="left:73.7px;top:630.8px" width="14" height="14" viewBox="0 0 14 14"><g fill="none" stroke="#1D2A3E" stroke-width="1"><rect x="4.6" y="0.7" width="4.3" height="3.2" rx=".6"/><path d="M6.75 3.9V7M0.3 7h13.4"/><path d="M0.7 10.3h2.8l1.2 1.7-1.2 1.7H0.7z"/><path d="M9.3 10.3h2.8l1.2 1.7-1.2 1.7H9.3z"/></g><g fill="#1D2A3E"><path d="M1.2 7L2.6 5.6 4 7 2.6 8.4z"/><path d="M5.4 7L6.8 5.6 8.2 7 6.8 8.4z"/><path d="M10 7L11.4 5.6 12.8 7 11.4 8.4z"/></g></svg>
<svg class="a" style="left:99px;top:632.1px" width="13" height="13" viewBox="0 0 13 13"><g fill="none" stroke="#1D2A3E" stroke-width="1"><path d="M0.5 0.5h11.7v8H5.8L3.2 11.8V8.5H0.5z"/></g><g fill="#1D2A3E"><circle cx="3.2" cy="4.3" r=".75"/><circle cx="6.3" cy="4.3" r=".75"/><circle cx="9.2" cy="4.3" r=".75"/></g></svg>
<svg class="a" style="left:124.7px;top:636.6px" width="15" height="4" viewBox="0 0 15 4"><g fill="none" stroke="#1D2A3E" stroke-width=".95"><rect x="0.5" y="0.5" width="2.5" height="2.6"/><rect x="5.7" y="0.5" width="2.5" height="2.6"/><rect x="11" y="0.5" width="2.5" height="2.6"/></g></svg>
<svg class="a" style="left:151px;top:631.1px" width="13" height="14" viewBox="0 0 13 14"><path d="M6.1 0.5L11.8 4.1v6.4L6.1 13.7 0.5 10.5V4.1zM0.5 4.1L6.1 8l5.7-3.9" fill="none" stroke="#1D2A3E" stroke-width="1" stroke-linejoin="round"/></svg>
<div class="a" style="left:207.50px;top:632px;font-size:10.68px;line-height:10.68px;color:#1D2A3E;letter-spacing:0.610px;">Aug 13, 2025 @ 14:58:13.331</div>
<div class="a" style="left:387.50px;top:632px;font-size:11.36px;line-height:11.36px;color:#1750BA;-webkit-text-stroke:0.25px currentColor;">Process Execution from an ...</div>
<div class="a" style="left:720.60px;top:632px;font-size:11.19px;line-height:11.19px;color:#1D2A3E;">medium</div>
<div class="a" style="left:593.00px;width:300px;text-align:right;top:632px;font-size:11.4px;line-height:11.4px;color:#1D2A3E;">47</div>
<div class="a" style="left:905.70px;top:632px;font-size:11.6px;line-height:11.6px;color:#1D2A3E;width:239.3px;overflow:hidden;">process event with process posh.exe, parent pr</div>
<div class="a" style="left:18px;top:655.6px;width:14.5px;height:14.5px;border:1px solid #7A8FB5;border-radius:3px;background:#fff"></div>
<svg class="a" style="left:49.5px;top:657.4px" width="13" height="13" viewBox="0 0 13 13"><g fill="none" stroke="#1D2A3E" stroke-width="1"><path d="M1 12L5.6 7.4M8 5L12.3 0.7M1 8.3V12h3.7M8.7 0.7h3.6v3.6"/></g></svg>
<svg class="a" style="left:73.7px;top:655.9px" width="14" height="14" viewBox="0 0 14 14"><g fill="none" stroke="#1D2A3E" stroke-width="1"><rect x="4.6" y="0.7" width="4.3" height="3.2" rx=".6"/><path d="M6.75 3.9V7M0.3 7h13.4"/><path d="M0.7 10.3h2.8l1.2 1.7-1.2 1.7H0.7z"/><path d="M9.3 10.3h2.8l1.2 1.7-1.2 1.7H9.3z"/></g><g fill="#1D2A3E"><path d="M1.2 7L2.6 5.6 4 7 2.6 8.4z"/><path d="M5.4 7L6.8 5.6 8.2 7 6.8 8.4z"/><path d="M10 7L11.4 5.6 12.8 7 11.4 8.4z"/></g></svg>
<svg class="a" style="left:99px;top:657.2px" width="13" height="13" viewBox="0 0 13 13"><g fill="none" stroke="#1D2A3E" stroke-width="1"><path d="M0.5 0.5h11.7v8H5.8L3.2 11.8V8.5H0.5z"/></g><g fill="#1D2A3E"><circle cx="3.2" cy="4.3" r=".75"/><circle cx="6.3" cy="4.3" r=".75"/><circle cx="9.2" cy="4.3" r=".75"/></g></svg>
<svg class="a" style="left:124.7px;top:661.7px" width="15" height="4" viewBox="0 0 15 4"><g fill="none" stroke="#1D2A3E" stroke-width=".95"><rect x="0.5" y="0.5" width="2.5" height="2.6"/><rect x="5.7" y="0.5" width="2.5" height="2.6"/><rect x="11" y="0.5" width="2.5" height="2.6"/></g></svg>
<svg class="a" style="left:151px;top:656.2px" width="13" height="14" viewBox="0 0 13 14"><path d="M6.1 0.5L11.8 4.1v6.4L6.1 13.7 0.5 10.5V4.1zM0.5 4.1L6.1 8l5.7-3.9" fill="none" stroke="#1D2A3E" stroke-width="1" stroke-linejoin="round"/></svg>
<div class="a" style="left:207.50px;top:657px;font-size:10.68px;line-height:10.68px;color:#1D2A3E;letter-spacing:0.610px;">Aug 13, 2025 @ 14:58:13.330</div>
<div class="a" style="left:387.50px;top:657px;font-size:11.36px;line-height:11.36px;color:#1750BA;-webkit-text-stroke:0.25px currentColor;">Process Execution from an ...</div>
<div class="a" style="left:720.60px;top:657px;font-size:11.19px;line-height:11.19px;color:#1D2A3E;">medium</div>
<div class="a" style="left:593.00px;width:300px;text-align:right;top:657px;font-size:11.4px;line-height:11.4px;color:#1D2A3E;">47</div>
<div class="a" style="left:905.70px;top:657px;font-size:11.6px;line-height:11.6px;color:#1D2A3E;width:239.3px;overflow:hidden;">process event with process eqnedt32.exe, pare</div>
<div class="a" style="left:18px;top:680.7px;width:14.5px;height:14.5px;border:1px solid #7A8FB5;border-radius:3px;background:#fff"></div>
<svg class="a" style="left:49.5px;top:682.5px" width="13" height="13" viewBox="0 0 13 13"><g fill="none" stroke="#1D2A3E" stroke-width="1"><path d="M1 12L5.6 7.4M8 5L12.3 0.7M1 8.3V12h3.7M8.7 0.7h3.6v3.6"/></g></svg>
<svg class="a" style="left:73.7px;top:681.0px" width="14" height="14" viewBox="0 0 14 14"><g fill="none" stroke="#1D2A3E" stroke-width="1"><rect x="4.6" y="0.7" width="4.3" height="3.2" rx=".6"/><path d="M6.75 3.9V7M0.3 7h13.4"/><path d="M0.7 10.3h2.8l1.2 1.7-1.2 1.7H0.7z"/><path d="M9.3 10.3h2.8l1.2 1.7-1.2 1.7H9.3z"/></g><g fill="#1D2A3E"><path d="M1.2 7L2.6 5.6 4 7 2.6 8.4z"/><path d="M5.4 7L6.8 5.6 8.2 7 6.8 8.4z"/><path d="M10 7L11.4 5.6 12.8 7 11.4 8.4z"/></g></svg>
<svg class="a" style="left:99px;top:682.3px" width="13" height="13" viewBox="0 0 13 13"><g fill="none" stroke="#1D2A3E" stroke-width="1"><path d="M0.5 0.5h11.7v8H5.8L3.2 11.8V8.5H0.5z"/></g><g fill="#1D2A3E"><circle cx="3.2" cy="4.3" r=".75"/><circle cx="6.3" cy="4.3" r=".75"/><circle cx="9.2" cy="4.3" r=".75"/></g></svg>
<svg class="a" style="left:124.7px;top:686.8px" width="15" height="4" viewBox="0 0 15 4"><g fill="none" stroke="#1D2A3E" stroke-width=".95"><rect x="0.5" y="0.5" width="2.5" height="2.6"/><rect x="5.7" y="0.5" width="2.5" height="2.6"/><rect x="11" y="0.5" width="2.5" height="2.6"/></g></svg>
<svg class="a" style="left:151px;top:681.3px" width="13" height="14" viewBox="0 0 13 14"><path d="M6.1 0.5L11.8 4.1v6.4L6.1 13.7 0.5 10.5V4.1zM0.5 4.1L6.1 8l5.7-3.9" fill="none" stroke="#1D2A3E" stroke-width="1" stroke-linejoin="round"/></svg>
<div class="a" style="left:207.50px;top:683px;font-size:10.68px;line-height:10.68px;color:#1D2A3E;letter-spacing:0.610px;">Aug 13, 2025 @ 14:58:13.329</div>
<div class="a" style="left:387.50px;top:683px;font-size:11.36px;line-height:11.36px;color:#1750BA;-webkit-text-stroke:0.25px currentColor;">Process Execution from an ...</div>
<div class="a" style="left:720.60px;top:683px;font-size:11.19px;line-height:11.19px;color:#1D2A3E;">medium</div>
<div class="a" style="left:593.00px;width:300px;text-align:right;top:683px;font-size:11.4px;line-height:11.4px;color:#1D2A3E;">47</div>
<div class="a" style="left:905.70px;top:683px;font-size:11.6px;line-height:11.6px;color:#1D2A3E;width:239.3px;overflow:hidden;">process event with process posh.exe, parent pr</div>
<div class="a" style="left:18px;top:705.8px;width:14.5px;height:14.5px;border:1px solid #7A8FB5;border-radius:3px;background:#fff"></div>
<svg class="a" style="left:49.5px;top:707.6px" width="13" height="13" viewBox="0 0 13 13"><g fill="none" stroke="#1D2A3E" stroke-width="1"><path d="M1 12L5.6 7.4M8 5L12.3 0.7M1 8.3V12h3.7M8.7 0.7h3.6v3.6"/></g></svg>
<svg class="a" style="left:73.7px;top:706.1px" width="14" height="14" viewBox="0 0 14 14"><g fill="none" stroke="#1D2A3E" stroke-width="1"><rect x="4.6" y="0.7" width="4.3" height="3.2" rx=".6"/><path d="M6.75 3.9V7M0.3 7h13.4"/><path d="M0.7 10.3h2.8l1.2 1.7-1.2 1.7H0.7z"/><path d="M9.3 10.3h2.8l1.2 1.7-1.2 1.7H9.3z"/></g><g fill="#1D2A3E"><path d="M1.2 7L2.6 5.6 4 7 2.6 8.4z"/><path d="M5.4 7L6.8 5.6 8.2 7 6.8 8.4z"/><path d="M10 7L11.4 5.6 12.8 7 11.4 8.4z"/></g></svg>
<svg class="a" style="left:99px;top:707.4px" width="13" height="13" viewBox="0 0 13 13"><g fill="none" stroke="#1D2A3E" stroke-width="1"><path d="M0.5 0.5h11.7v8H5.8L3.2 11.8V8.5H0.5z"/></g><g fill="#1D2A3E"><circle cx="3.2" cy="4.3" r=".75"/><circle cx="6.3" cy="4.3" r=".75"/><circle cx="9.2" cy="4.3" r=".75"/></g></svg>
<svg class="a" style="left:124.7px;top:711.9px" width="15" height="4" viewBox="0 0 15 4"><g fill="none" stroke="#1D2A3E" stroke-width=".95"><rect x="0.5" y="0.5" width="2.5" height="2.6"/><rect x="5.7" y="0.5" width="2.5" height="2.6"/><rect x="11" y="0.5" width="2.5" height="2.6"/></g></svg>
<svg class="a" style="left:151px;top:706.4px" width="13" height="14" viewBox="0 0 13 14"><path d="M6.1 0.5L11.8 4.1v6.4L6.1 13.7 0.5 10.5V4.1zM0.5 4.1L6.1 8l5.7-3.9" fill="none" stroke="#1D2A3E" stroke-width="1" stroke-linejoin="round"/></svg>
<div class="a" style="left:207.50px;top:708px;font-size:10.68px;line-height:10.68px;color:#1D2A3E;letter-spacing:0.610px;">Aug 13, 2025 @ 14:58:13.328</div>
<div class="a" style="left:387.50px;top:708px;font-size:11.36px;line-height:11.36px;color:#1750BA;-webkit-text-stroke:0.25px currentColor;">Process Execution from an ...</div>
<div class="a" style="left:720.60px;top:708px;font-size:11.19px;line-height:11.19px;color:#1D2A3E;">medium</div>
<div class="a" style="left:593.00px;width:300px;text-align:right;top:708px;font-size:11.4px;line-height:11.4px;color:#1D2A3E;">47</div>
<div class="a" style="left:905.70px;top:708px;font-size:11.6px;line-height:11.6px;color:#1D2A3E;width:239.3px;overflow:hidden;">process event with process eqnedt32.exe, pare</div>
<div class="a" style="left:18px;top:730.9px;width:14.5px;height:14.5px;border:1px solid #7A8FB5;border-radius:3px;background:#fff"></div>
<svg class="a" style="left:49.5px;top:732.7px" width="13" height="13" viewBox="0 0 13 13"><g fill="none" stroke="#1D2A3E" stroke-width="1"><path d="M1 12L5.6 7.4M8 5L12.3 0.7M1 8.3V12h3.7M8.7 0.7h3.6v3.6"/></g></svg>
<svg class="a" style="left:73.7px;top:731.2px" width="14" height="14" viewBox="0 0 14 14"><g fill="none" stroke="#1D2A3E" stroke-width="1"><rect x="4.6" y="0.7" width="4.3" height="3.2" rx=".6"/><path d="M6.75 3.9V7M0.3 7h13.4"/><path d="M0.7 10.3h2.8l1.2 1.7-1.2 1.7H0.7z"/><path d="M9.3 10.3h2.8l1.2 1.7-1.2 1.7H9.3z"/></g><g fill="#1D2A3E"><path d="M1.2 7L2.6 5.6 4 7 2.6 8.4z"/><path d="M5.4 7L6.8 5.6 8.2 7 6.8 8.4z"/><path d="M10 7L11.4 5.6 12.8 7 11.4 8.4z"/></g></svg>
<svg class="a" style="left:99px;top:732.5px" width="13" height="13" viewBox="0 0 13 13"><g fill="none" stroke="#1D2A3E" stroke-width="1"><path d="M0.5 0.5h11.7v8H5.8L3.2 11.8V8.5H0.5z"/></g><g fill="#1D2A3E"><circle cx="3.2" cy="4.3" r=".75"/><circle cx="6.3" cy="4.3" r=".75"/><circle cx="9.2" cy="4.3" r=".75"/></g></svg>
<svg class="a" style="left:124.7px;top:737.0px" width="15" height="4" viewBox="0 0 15 4"><g fill="none" stroke="#1D2A3E" stroke-width=".95"><rect x="0.5" y="0.5" width="2.5" height="2.6"/><rect x="5.7" y="0.5" width="2.5" height="2.6"/><rect x="11" y="0.5" width="2.5" height="2.6"/></g></svg>
<svg class="a" style="left:151px;top:731.5px" width="13" height="14" viewBox="0 0 13 14"><path d="M6.1 0.5L11.8 4.1v6.4L6.1 13.7 0.5 10.5V4.1zM0.5 4.1L6.1 8l5.7-3.9" fill="none" stroke="#1D2A3E" stroke-width="1" stroke-linejoin="round"/></svg>
<div class="a" style="left:207.50px;top:733px;font-size:10.68px;line-height:10.68px;color:#1D2A3E;letter-spacing:0.610px;">Aug 13, 2025 @ 14:58:13.326</div>
<div class="a" style="left:387.50px;top:733px;font-size:11.36px;line-height:11.36px;color:#1750BA;-webkit-text-stroke:0.25px currentColor;">Process Execution from an ...</div>
<div class="a" style="left:720.60px;top:733px;font-size:11.19px;line-height:11.19px;color:#1D2A3E;">medium</div>
<div class="a" style="left:593.00px;width:300px;text-align:right;top:733px;font-size:11.4px;line-height:11.4px;color:#1D2A3E;">47</div>
<div class="a" style="left:905.70px;top:733px;font-size:11.6px;line-height:11.6px;color:#1D2A3E;width:239.3px;overflow:hidden;">process event with process winword.exe, parer</div>
<div class="a" style="left:18px;top:756.0px;width:14.5px;height:14.5px;border:1px solid #7A8FB5;border-radius:3px;background:#fff"></div>
<svg class="a" style="left:49.5px;top:757.8px" width="13" height="13" viewBox="0 0 13 13"><g fill="none" stroke="#1D2A3E" stroke-width="1"><path d="M1 12L5.6 7.4M8 5L12.3 0.7M1 8.3V12h3.7M8.7 0.7h3.6v3.6"/></g></svg>
<svg class="a" style="left:73.7px;top:756.3px" width="14" height="14" viewBox="0 0 14 14"><g fill="none" stroke="#1D2A3E" stroke-width="1"><rect x="4.6" y="0.7" width="4.3" height="3.2" rx=".6"/><path d="M6.75 3.9V7M0.3 7h13.4"/><path d="M0.7 10.3h2.8l1.2 1.7-1.2 1.7H0.7z"/><path d="M9.3 10.3h2.8l1.2 1.7-1.2 1.7H9.3z"/></g><g fill="#1D2A3E"><path d="M1.2 7L2.6 5.6 4 7 2.6 8.4z"/><path d="M5.4 7L6.8 5.6 8.2 7 6.8 8.4z"/><path d="M10 7L11.4 5.6 12.8 7 11.4 8.4z"/></g></svg>
<svg class="a" style="left:99px;top:757.6px" width="13" height="13" viewBox="0 0 13 13"><g fill="none" stroke="#1D2A3E" stroke-width="1"><path d="M0.5 0.5h11.7v8H5.8L3.2 11.8V8.5H0.5z"/></g><g fill="#1D2A3E"><circle cx="3.2" cy="4.3" r=".75"/><circle cx="6.3" cy="4.3" r=".75"/><circle cx="9.2" cy="4.3" r=".75"/></g></svg>
<svg class="a" style="left:124.7px;top:762.1px" width="15" height="4" viewBox="0 0 15 4"><g fill="none" stroke="#1D2A3E" stroke-width=".95"><rect x="0.5" y="0.5" width="2.5" height="2.6"/><rect x="5.7" y="0.5" width="2.5" height="2.6"/><rect x="11" y="0.5" width="2.5" height="2.6"/></g></svg>
<svg class="a" style="left:151px;top:756.6px" width="13" height="14" viewBox="0 0 13 14"><path d="M6.1 0.5L11.8 4.1v6.4L6.1 13.7 0.5 10.5V4.1zM0.5 4.1L6.1 8l5.7-3.9" fill="none" stroke="#1D2A3E" stroke-width="1" stroke-linejoin="round"/></svg>
<div class="a" style="left:207.50px;top:758px;font-size:10.68px;line-height:10.68px;color:#1D2A3E;letter-spacing:0.610px;">Aug 13, 2025 @ 14:58:13.325</div>
<div class="a" style="left:387.50px;top:758px;font-size:11.36px;line-height:11.36px;color:#1750BA;-webkit-text-stroke:0.25px currentColor;">Process Execution from an ...</div>
<div class="a" style="left:720.60px;top:758px;font-size:11.19px;line-height:11.19px;color:#1D2A3E;">medium</div>
<div class="a" style="left:593.00px;width:300px;text-align:right;top:758px;font-size:11.4px;line-height:11.4px;color:#1D2A3E;">47</div>
<div class="a" style="left:905.70px;top:758px;font-size:11.6px;line-height:11.6px;color:#1D2A3E;width:239.3px;overflow:hidden;">process event with process winword.exe, parer</div>
</body></html>
